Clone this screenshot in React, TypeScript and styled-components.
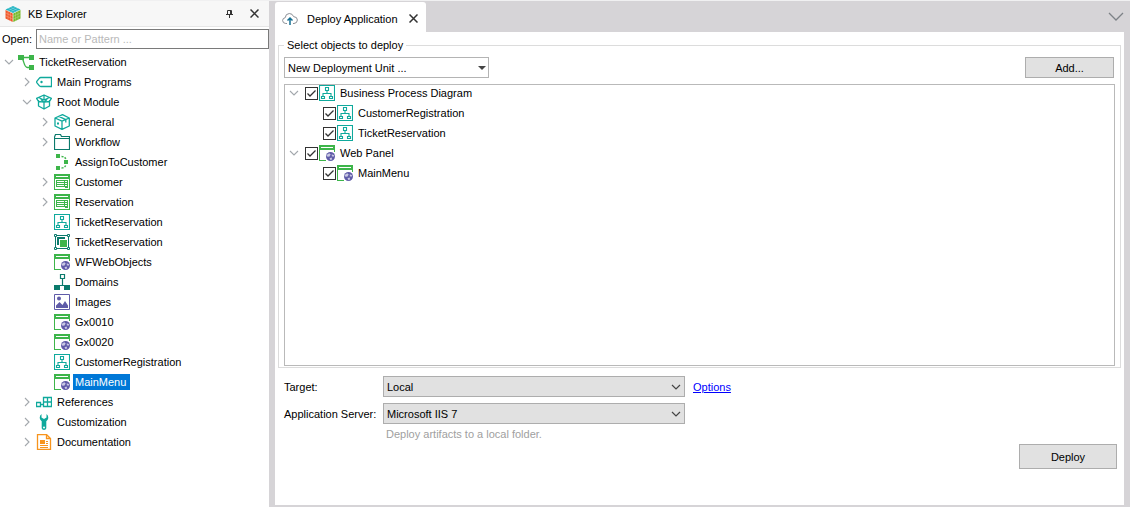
import React, { useId, useState } from "react";
import styled, { createGlobalStyle, css } from "styled-components";

const GlobalStyle = createGlobalStyle`
  *, *::before, *::after { box-sizing: border-box; }
  body {
    margin: 0;
    background: #d6d4d7;
    color: #000;
    font: 11px/14px "Liberation Sans", Arial, sans-serif;
  }
  button, input, select { font: inherit; color: inherit; }
`;

const TEAL = "#0fa99c";
const DARK_TEAL = "#0b7a6c";
const GREEN = "#3db54a";
const PURPLE = "#5f5ba8";
const ORANGE = "#f7941d";

/* ---------- icons ---------- */

const Glyph = styled.svg.attrs({ "aria-hidden": true })`
  display: block;
  flex: none;
`;

const Icon16 = ({ children }: { children: React.ReactNode }) => (
  <Glyph width="16" height="16" viewBox="0 0 16 16" fill="none">
    {children}
  </Glyph>
);

const FlowIcon = () => (
  <Icon16>
    <path d="M0 1h6v5H0zM11 1h5v5h-5zM11 11h5v5h-5z" fill={GREEN} />
    <path d="M6 3.500h5M4.500 5c1.500 2 1.500 8.500 5 8.500H11" stroke={GREEN} strokeWidth="1.300" />
  </Icon16>
);

const TagIcon = () => (
  <Icon16>
    <path d="M4.800 3.500H15.500v9H4.800Q3.800 12.500 3.200 11.700L.8 8.600Q.5 8 .8 7.400L3.200 4.300Q3.800 3.500 4.800 3.500Z" stroke={TEAL} strokeWidth="1.300" />
    <circle cx="5.500" cy="8" r="1.200" fill={TEAL} />
  </Icon16>
);

const OpenBoxIcon = () => (
  <Icon16>
    <path d="M2.500 6v6L8 15l5.500-3V6M8 8.200V15M.6 4.300 8 1l7.400 3.300L13.500 7.500 8 8.200 2.500 7.500ZM2.500 3.500 8 6l5.500-2.500M8 1v5M4.500 5 8 8.200 11.500 5" stroke={TEAL} strokeWidth="1.300" strokeLinejoin="round" />
  </Icon16>
);

const BoxIcon = () => (
  <Icon16>
    <path d="M1 4 8.500.7 15.300 4v8L8 15.400 1 12ZM1 4l7 3.200L15.300 4M8 7.200v8.200M4.800 2.400l7 3.200v2.800" stroke={TEAL} strokeWidth="1.300" strokeLinejoin="round" />
    <path d="M3 8.500h2v2H3z" fill={TEAL} />
  </Icon16>
);

const FolderIcon = () => (
  <Icon16>
    <path d="M.5 15.500V3l1-2.500h5L7.500 2.500h8v13ZM.5 4.500h15" stroke={DARK_TEAL} strokeWidth="1.200" />
  </Icon16>
);

const ProcedureIcon = () => (
  <Icon16>
    <path d="M2 0h4v4H2zM10 6h4v4h-4zM2 12h4v4H2z" fill={GREEN} />
    <path d="M7.500 2.500Q11 2.500 12 5.500M7.500 14Q11 14 12 10.500" stroke={GREEN} strokeWidth="1.500" strokeDasharray="2 1.200" />
  </Icon16>
);

const TransactionIcon = () => (
  <Icon16>
    <path d="M0 0h16v16H0zM1 5v10h14V5zM2 2v1h12V2z" fill={GREEN} fillRule="evenodd" />
    <path d="M2 6h12v8h-3v-1H2zM3 7v1h7V7zM11 7v1h2V7zM3 9v1h7V9zM11 9v1h2V9zM3 11v1h7v-1zM11 11v1h2v-1z" fill={GREEN} fillRule="evenodd" />
  </Icon16>
);

const DiagramIcon = () => (
  <Icon16>
    <path d="M.5.5h15v15H.5zM6.500 2.500h3v3h-3zM2.500 11.500h3v2h-3zM10.500 11.500h3v2h-3zM8 6v2.500M4 11V8.500h8V11" stroke={TEAL} strokeWidth="1.100" />
  </Icon16>
);

const SubprocessIcon = () => (
  <Icon16>
    <path d="M1.500 1.500h13v13h-13z" stroke={DARK_TEAL} />
    <path d="M.5.5h2v2h-2zM13.500.5h2v2h-2zM.5 13.500h2v2h-2zM13.500 13.500h2v2h-2z" fill="#fff" stroke={DARK_TEAL} />
    <path d="M3 3h8v2H5v6H3z" fill={DARK_TEAL} />
    <path d="M6 6h7v7H6z" fill={GREEN} />
  </Icon16>
);

const WebPanelIcon = () => (
  <Icon16>
    <path d="M0 0h16v5H0zM0 5h1v11H0zM0 15h7v1H0zM15 5h1v2h-1z" fill={GREEN} />
    <path d="M2 2h12v1H2z" fill="#fff" />
    <circle cx="11.500" cy="11.500" r="4.500" fill={PURPLE} />
    <path d="M7.600 10 10.200 8.300l1.500 1.200-1.400 2.300-2.500-.3ZM12.800 9.200l2.300 1-.5 1.600-1.800-.6ZM10.500 13.200l2-.6.8 1.600-1.800 1Z" fill="#c9c8e3" />
  </Icon16>
);

const DomainIcon = () => (
  <Icon16>
    <path d="M6.500 .5h4v4h-4zM8.500 5v6M3 11.500h10" stroke={DARK_TEAL} strokeWidth="1.200" />
    <path d="M0 11h6v5H0zM10 11h6v5h-6z" fill={DARK_TEAL} />
  </Icon16>
);

const ImageIcon = () => (
  <Icon16>
    <path d="M.5.500h15v15H.5z" stroke={PURPLE} />
    <path d="M2 14V11.500L5.500 8l3 3L11 7l3 4.500V14Z" fill={PURPLE} />
    <circle cx="5" cy="4.500" r="2" fill={PURPLE} />
  </Icon16>
);

const ReferencesIcon = () => (
  <Icon16>
    <path d="M.5 8.500h4v4h-4zM7.500 3.500h8v9h-8zM11.500 3.500v9M7.500 8h8M4.500 10.500h3" stroke={TEAL} strokeWidth="1.300" />
  </Icon16>
);

const WrenchIcon = () => (
  <Icon16>
    <path d="M5.500 0v3.500L8 5l2.500-1.500V0Q12.500 1.300 12.300 4 12.100 6 10.300 7.200V14.300Q10 16 8 16 6 16 5.700 14.300V7.200Q3.900 6 3.700 4 3.500 1.300 5.500 0Z" fill={TEAL} />
    <circle cx="8" cy="13.500" r="1" fill="#fff" />
  </Icon16>
);

const DocumentIcon = () => (
  <Icon16>
    <path d="M1.500 .5h9l4 4v11h-13zM10.500.5v4h4" stroke={ORANGE} strokeWidth="1.300" />
    <path d="M4 6h5v4H4zM10 7h2v1h-2zM10 9h2v1h-2zM4 11h8v1H4zM4 13h8v1H4z" fill={ORANGE} />
  </Icon16>
);

const LogoIcon = () => (
  <Icon16>
    <path d="M8 0 15.500 3.500 8 7 .5 3.500Z" fill="#1fb3c2" />
    <path d="M.5 4 7.700 7.400V16L.5 12.500Z" fill="#f0582a" />
    <path d="M15.500 4 8.300 7.400V16l7.200-3.500Z" fill="#76b82a" />
    <path d="M3 2.300 10.500 5.800M5.500 1.200 13 4.700M13 2.300 5.500 5.800M10.500 1.200 3 4.700M3 5.200V13.700M5.400 6.300V15M.5 6.900 8 10.400l7.500-3.500M.5 9.800 8 13.300l7.500-3.500M13 5.200v8.500M10.600 6.300V15" stroke="#fff" strokeOpacity=".45" strokeWidth=".5" />
  </Icon16>
);

const CloudIcon = () => (
  <Icon16>
    <path d="M5 12.500H3.800Q.7 12.300.6 9.500.7 7 3.200 6.700 3.500 2.700 7.300 2.500 10.500 2.500 11.600 5.600 15.300 5.800 15.400 9 15.200 12.300 12 12.500H11" stroke="#8b8f96" />
    <path d="M8 14V7M5.500 9.500 8 7l2.500 2.500" stroke="#156f93" strokeWidth="1.500" />
  </Icon16>
);

const CrossIcon = () => (
  <Glyph width="9" height="9" viewBox="0 0 9 9" stroke="#333" strokeWidth="1.500">
    <path d="M.5.5l8 8M8.500.5l-8 8" />
  </Glyph>
);

const PinIcon = () => (
  <Glyph width="9" height="9" viewBox="0 0 9 9" stroke="#333" fill="none">
    <path d="M2.500 5V1.500h4V5M1 5.500h7M5.500 1.500V5M4.500 5.500V9" />
  </Glyph>
);

const Chevron = ({ open }: { open: boolean }) => (
  <Glyph width="10" height="10" viewBox="0 0 10 10" fill="none" stroke="#a3a8ad" strokeWidth="1.100">
    {open ? <path d="M1 3l4 4 4-4" /> : <path d="M3 1l4 4-4 4" />}
  </Glyph>
);

/* ---------- layout ---------- */

const Shell = styled.div`
  display: grid;
  grid-template-columns: 269px minmax(0, 1fr);
  min-height: 100vh;
  border-top: 1px solid #f0f0f1;
`;

const Sidebar = styled.aside`
  background: #fff;
`;

const SidebarHeader = styled.header`
  display: flex;
  align-items: center;
  height: 26px;
  padding: 0 10px 0 5px;
  background: #f7f7f7;
  border-bottom: 1px solid #e6e6e6;
`;

const SidebarTitle = styled.h1`
  flex: 1;
  margin: 0 0 0 7px;
  font-size: 11px;
  font-weight: 400;
`;

const IconButton = styled.button`
  display: grid;
  place-items: center;
  padding: 0;
  border: 0;
  background: none;
`;

const HeaderActions = styled.div`
  display: flex;
  gap: 16px;
`;

const SearchRow = styled.div`
  display: flex;
  align-items: center;
  gap: 4px;
  padding: 2px 0 3px 2px;
`;

const SearchInput = styled.input`
  flex: 1;
  min-width: 0;
  height: 20px;
  padding: 0 2px;
  border: 1px solid #7a7a7a;
  background: #fff;
  &::placeholder { color: #b9b9b9; opacity: 1; }
`;

const TreeList = styled.ul`
  margin: 0;
  padding: 0;
  list-style: none;
`;

const TreeRow = styled.li<{ $level: number }>`
  display: flex;
  align-items: center;
  height: 20px;
  padding-left: ${(p) => 4 + p.$level * 18}px;
`;

const Toggle = styled(IconButton)`
  width: 10px;
  height: 10px;
  margin-right: 4px;
`;

const ToggleSpace = styled.span`
  width: 14px;
`;

const NodeLabel = styled.span<{ $selected?: boolean }>`
  margin-left: 3px;
  padding: 1px 4px 1px 2px;
  white-space: nowrap;
  ${(p) => p.$selected && css`
    background: #0078d7;
    color: #fff;
  `}
`;

const Main = styled.main`
  display: flex;
  flex-direction: column;
  min-width: 0;
  padding: 1px 6px 2px;
`;

const TabBar = styled.div`
  display: flex;
  align-items: center;
  justify-content: space-between;
`;

const Tab = styled.div`
  display: flex;
  align-items: center;
  gap: 9px;
  height: 30px;
  padding: 3px 8px 0 7px;
  border-radius: 3px 3px 0 0;
  background: #fff;
`;

const TabTitle = styled.span`
  padding-right: 2px;
`;

const Panel = styled.section`
  display: flex;
  flex: 1;
  flex-direction: column;
  padding: 6px 3px 36px;
  background: #fff;
`;

const Group = styled.fieldset`
  display: flex;
  flex: 1;
  flex-direction: column;
  gap: 6px;
  min-width: 0;
  margin: 0;
  padding: 5px 5px 1px;
  border: 1px solid #dcdcdc;
`;

const Legend = styled.legend`
  padding: 0 3px;
`;

const Toolbar = styled.div`
  display: flex;
  justify-content: space-between;
  padding-right: 1px;
`;

const Button = styled.button<{ $large?: boolean }>`
  width: ${(p) => (p.$large ? 98 : 89)}px;
  height: ${(p) => (p.$large ? 25 : 21)}px;
  padding: 0;
  border: 1px solid #adadad;
  background: #e1e1e1;
`;

const SelectBox = styled.div<{ $wide?: boolean }>`
  display: grid;
  align-items: center;
  width: ${(p) => (p.$wide ? 302 : 205)}px;
  > * { grid-area: 1 / 1; }
  > svg { justify-self: end; margin-right: ${(p) => (p.$wide ? 4 : 3)}px; pointer-events: none; }
`;

const Select = styled.select<{ $filled?: boolean }>`
  appearance: none;
  width: 100%;
  height: 21px;
  padding: 0 20px 0 3px;
  border: 1px solid ${(p) => (p.$filled ? "#adadad" : "#b4b4b4")};
  border-radius: 0;
  background: ${(p) => (p.$filled ? "#e1e1e1" : "#fff")};
`;

const ObjectList = styled.ul`
  display: flex;
  flex: 1;
  flex-direction: column;
  gap: 4px;
  min-height: 0;
  margin: 0;
  padding: 0;
  border: 1px solid #b9b9b9;
  list-style: none;
`;

const ObjectRow = styled(TreeRow)`
  height: 16px;
`;

const ObjectLabel = styled.label`
  display: flex;
  align-items: center;
`;

const CheckBox = styled.span`
  display: grid;
  place-items: center;
  margin: 0 1px 0 2px;
  > * { grid-area: 1 / 1; }
  > svg { pointer-events: none; visibility: hidden; }
  > input:checked + svg { visibility: visible; }
`;

const CheckInput = styled.input`
  appearance: none;
  width: 13px;
  height: 13px;
  margin: 0;
  border: 1px solid #333;
  background: #fff;
`;

const Settings = styled.div`
  display: grid;
  grid-template-columns: 99px 302px 1fr;
  align-items: center;
  gap: 6px 0;
  padding: 8px 6px 0;
`;

const OptionsLink = styled.a`
  justify-self: start;
  margin-left: 8px;
  color: #00f;
`;

const Hint = styled.p`
  grid-column: 2;
  margin: -3px 0 0 3px;
  color: #a0a0a0;
`;

const Footer = styled.footer`
  display: flex;
  justify-content: flex-end;
  padding: 3px 4px 0;
`;

/* ---------- data ---------- */

type Node = {
  name: string;
  level: number;
  icon: () => React.JSX.Element;
  open?: boolean;
  selected?: boolean;
};

const explorerNodes: Node[] = [
  { name: "TicketReservation", level: 0, icon: FlowIcon, open: true },
  { name: "Main Programs", level: 1, icon: TagIcon, open: false },
  { name: "Root Module", level: 1, icon: OpenBoxIcon, open: true },
  { name: "General", level: 2, icon: BoxIcon, open: false },
  { name: "Workflow", level: 2, icon: FolderIcon, open: false },
  { name: "AssignToCustomer", level: 2, icon: ProcedureIcon },
  { name: "Customer", level: 2, icon: TransactionIcon, open: false },
  { name: "Reservation", level: 2, icon: TransactionIcon, open: false },
  { name: "TicketReservation", level: 2, icon: DiagramIcon },
  { name: "TicketReservation", level: 2, icon: SubprocessIcon },
  { name: "WFWebObjects", level: 2, icon: WebPanelIcon },
  { name: "Domains", level: 2, icon: DomainIcon },
  { name: "Images", level: 2, icon: ImageIcon },
  { name: "Gx0010", level: 2, icon: WebPanelIcon },
  { name: "Gx0020", level: 2, icon: WebPanelIcon },
  { name: "CustomerRegistration", level: 2, icon: DiagramIcon },
  { name: "MainMenu", level: 2, icon: WebPanelIcon, selected: true },
  { name: "References", level: 1, icon: ReferencesIcon, open: false },
  { name: "Customization", level: 1, icon: WrenchIcon, open: false },
  { name: "Documentation", level: 1, icon: DocumentIcon, open: false },
];

const deployNodes: Node[] = [
  { name: "Business Process Diagram", level: 0, icon: DiagramIcon, open: true },
  { name: "CustomerRegistration", level: 1, icon: DiagramIcon },
  { name: "TicketReservation", level: 1, icon: DiagramIcon },
  { name: "Web Panel", level: 0, icon: WebPanelIcon, open: true },
  { name: "MainMenu", level: 1, icon: WebPanelIcon },
];

const NodeToggle = ({ node }: { node: Node }) =>
  node.open === undefined ? (
    <ToggleSpace />
  ) : (
    <Toggle type="button" aria-label={`Toggle ${node.name}`} aria-expanded={node.open}>
      <Chevron open={node.open} />
    </Toggle>
  );

const DeployItem = ({ node }: { node: Node }) => {
  const id = useId();
  const [checked, setChecked] = useState(true);
  const NodeIcon = node.icon;
  return (
    <ObjectRow $level={node.level}>
      <NodeToggle node={node} />
      <ObjectLabel htmlFor={id}>
        <CheckBox>
          <CheckInput id={id} type="checkbox" checked={checked} onChange={(e) => setChecked(e.target.checked)} />
          <Glyph width="11" height="11" viewBox="0 0 11 11" fill="none" stroke="#333" strokeWidth="1.300">
            <path d="M1.500 5.500 4 8l5.500-5.500" />
          </Glyph>
        </CheckBox>
        <NodeIcon />
        <NodeLabel>{node.name}</NodeLabel>
      </ObjectLabel>
    </ObjectRow>
  );
};

const FilledSelect = ({ id, value }: { id: string; value: string }) => (
  <SelectBox $wide>
    <Select $filled id={id} defaultValue={value}>
      <option>{value}</option>
    </Select>
    <Glyph width="10" height="10" viewBox="0 0 10 10" fill="none" stroke="#444" strokeWidth="1.200">
      <path d="M1 3l4 4 4-4" />
    </Glyph>
  </SelectBox>
);

export default function App() {
  return (
    <>
      <GlobalStyle />
      <Shell>
        <Sidebar>
          <SidebarHeader>
            <LogoIcon />
            <SidebarTitle>KB Explorer</SidebarTitle>
            <HeaderActions>
              <IconButton type="button" aria-label="Pin"><PinIcon /></IconButton>
              <IconButton type="button" aria-label="Close explorer"><CrossIcon /></IconButton>
            </HeaderActions>
          </SidebarHeader>
          <SearchRow>
            <label htmlFor="open">Open:</label>
            <SearchInput id="open" type="text" placeholder="Name or Pattern ..." />
          </SearchRow>
          <TreeList>
            {explorerNodes.map((node, i) => (
              <TreeRow key={i} $level={node.level}>
                <NodeToggle node={node} />
                <node.icon />
                <NodeLabel $selected={node.selected}>{node.name}</NodeLabel>
              </TreeRow>
            ))}
          </TreeList>
        </Sidebar>
        <Main>
          <TabBar>
            <Tab>
              <CloudIcon />
              <TabTitle>Deploy Application</TabTitle>
              <IconButton type="button" aria-label="Close tab"><CrossIcon /></IconButton>
            </Tab>
            <IconButton type="button" aria-label="Open documents">
              <Glyph width="16" height="10" viewBox="0 0 16 10" fill="none" stroke="#7d8287" strokeWidth="1.300">
                <path d="M1 1l7 7 7-7" />
              </Glyph>
            </IconButton>
          </TabBar>
          <Panel>
            <Group>
              <Legend>Select objects to deploy</Legend>
              <Toolbar>
                <SelectBox>
                  <Select aria-label="Deployment unit" defaultValue="New Deployment Unit ...">
                    <option>New Deployment Unit ...</option>
                  </Select>
                  <Glyph width="8" height="4" viewBox="0 0 8 4">
                    <path d="M0 0h8L4 4z" fill="#444" />
                  </Glyph>
                </SelectBox>
                <Button type="button">Add...</Button>
              </Toolbar>
              <ObjectList>
                {deployNodes.map((node, i) => (
                  <DeployItem key={i} node={node} />
                ))}
              </ObjectList>
            </Group>
            <Settings>
              <label htmlFor="target">Target:</label>
              <FilledSelect id="target" value="Local" />
              <OptionsLink href="#options">Options</OptionsLink>
              <label htmlFor="server">Application Server:</label>
              <FilledSelect id="server" value="Microsoft IIS 7" />
              <Hint>Deploy artifacts to a local folder.</Hint>
            </Settings>
            <Footer>
              <Button $large type="button">Deploy</Button>
            </Footer>
          </Panel>
        </Main>
      </Shell>
    </>
  );
}
